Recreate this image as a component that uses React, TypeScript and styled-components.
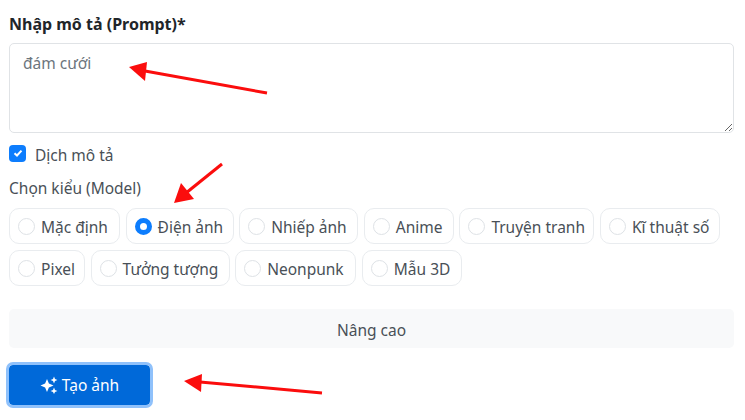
import styled, { createGlobalStyle } from "styled-components";

const GlobalStyle = createGlobalStyle`
  html, body {
    margin: 0;
    padding: 0;
    background: #ffffff;
    overflow: hidden;
  }
`;

const Page = styled.div`
  position: relative;
  width: 745px;
  height: 420px;
  box-sizing: border-box;
  padding: 13px 11px 0 9px;
  font-family: "Noto Sans", "Open Sans", sans-serif;
  font-size: 16px;
  color: #343a40;
`;

const PromptLabel = styled.label`
  display: block;
  height: 24px;
  line-height: 22px;
  margin-bottom: 6px;
  font-weight: 700;
  font-size: 16px;
  color: #212529;
`;

const PromptInput = styled.textarea`
  display: block;
  box-sizing: border-box;
  width: 100%;
  height: 90px;
  padding: 7px 13px;
  margin: 0;
  border: 1px solid #e0e3e6;
  border-radius: 5px;
  outline: none;
  resize: vertical;
  font-family: inherit;
  font-size: 15.5px;
  line-height: 24px;
  color: #6c757d;
`;

const CheckRow = styled.label`
  display: flex;
  align-items: center;
  gap: 9px;
  height: 24px;
  margin-top: 10px;
  font-size: 15.5px;
  color: #495057;
`;

const CheckBox = styled.span`
  display: flex;
  align-items: center;
  justify-content: center;
  width: 17px;
  height: 17px;
  margin-bottom: 4px;
  border-radius: 4px;
  background: #0d7dfd;
`;

const ModelLabel = styled.div`
  height: 24px;
  line-height: 24px;
  margin-top: 9px;
  margin-bottom: 8px;
  font-size: 15.5px;
  color: #495057;
`;

const Chips = styled.div`
  display: flex;
  flex-wrap: wrap;
  gap: 6px 5.6px;
`;

const Chip = styled.label<{ $width: number }>`
  display: flex;
  align-items: center;
  gap: 6px;
  box-sizing: border-box;
  width: ${(p) => p.$width}px;
  height: 36px;
  padding: 2px 0 0 8px;
  border: 1px solid #e9ecef;
  border-radius: 10px;
  font-size: 15.5px;
  color: #495057;
  white-space: nowrap;
`;

const Radio = styled.span<{ $checked?: boolean }>`
  box-sizing: border-box;
  flex: none;
  width: 17px;
  height: 17px;
  margin-top: -2px;
  border-radius: 50%;
  border: ${(p) => (p.$checked ? "5px solid #0d7dfd" : "1px solid #dee2e6")};
  background: #ffffff;
`;

const Advanced = styled.div`
  display: flex;
  align-items: center;
  justify-content: center;
  height: 39px;
  margin-top: 23px;
  padding-top: 2px;
  box-sizing: border-box;
  border-radius: 5px;
  background: #f8f9fa;
  font-size: 15.5px;
  color: #495057;
`;

const Submit = styled.button`
  display: flex;
  align-items: center;
  justify-content: center;
  gap: 4px;
  width: 141px;
  height: 40px;
  margin-top: 17px;
  padding: 0;
  border: none;
  border-radius: 4px;
  outline: 3px solid #8fc1fb;
  background: #0069d9;
  font-family: inherit;
  font-size: 15.5px;
  color: #ffffff;
`;

const Arrows = styled.svg`
  position: absolute;
  top: 0;
  left: 0;
  pointer-events: none;
`;

const models = [
  { name: "Mặc định", width: 111 },
  { name: "Điện ảnh", width: 108 },
  { name: "Nhiếp ảnh", width: 119 },
  { name: "Anime", width: 90 },
  { name: "Truyện tranh", width: 135 },
  { name: "Kĩ thuật số", width: 120 },
  { name: "Pixel", width: 76 },
  { name: "Tưởng tượng", width: 139 },
  { name: "Neonpunk", width: 121 },
  { name: "Mẫu 3D", width: 100 },
];

export default function App() {
  return (
    <Page>
      <GlobalStyle />
      <PromptLabel>Nhập mô tả (Prompt)*</PromptLabel>
      <PromptInput defaultValue="đám cưới" />
      <CheckRow>
        <CheckBox>
          <svg width="10" height="10" viewBox="0 0 10 10">
            <path d="M1.5 5.2 L4 7.5 L8.5 2.6" fill="none" stroke="#fff" strokeWidth="2" />
          </svg>
        </CheckBox>
        Dịch mô tả
      </CheckRow>
      <ModelLabel>Chọn kiểu (Model)</ModelLabel>
      <Chips>
        {models.map((m) => (
          <Chip key={m.name} $width={m.width}>
            <Radio $checked={m.name === "Điện ảnh"} />
            {m.name}
          </Chip>
        ))}
      </Chips>
      <Advanced>Nâng cao</Advanced>
      <Submit>
        <svg width="18" height="18" viewBox="0 0 18 18" fill="#fff">
          <path d="M7 3 L8.9 7.6 L13.5 9.5 L8.9 11.4 L7 16 L5.1 11.4 L0.5 9.5 L5.1 7.6 Z" />
          <path d="M14 0.5 L15 2.9 L17.4 4 L15 5.1 L14 7.5 L13 5.1 L10.6 4 L13 2.9 Z" />
          <path d="M14 11.5 L15 13.9 L17.4 15 L15 16.1 L14 18 L13 16.1 L10.6 15 L13 13.9 Z" />
        </svg>
        Tạo ảnh
      </Submit>
      <Arrows width="745" height="420" viewBox="0 0 745 420">
        <path d="M267 93 L145 71" stroke="#fb0d0d" strokeWidth="3" fill="none" />
        <path d="M129 67 L147 62 L145 81 Z" fill="#fb0d0d" />
        <path d="M222 164 L186 193" stroke="#fb0d0d" strokeWidth="3" fill="none" />
        <path d="M174 203 L181 183 L194 199 Z" fill="#fb0d0d" />
        <path d="M322 393 L200 382" stroke="#fb0d0d" strokeWidth="3" fill="none" />
        <path d="M184 381 L202 374 L201 392 Z" fill="#fb0d0d" />
      </Arrows>
    </Page>
  );
}
